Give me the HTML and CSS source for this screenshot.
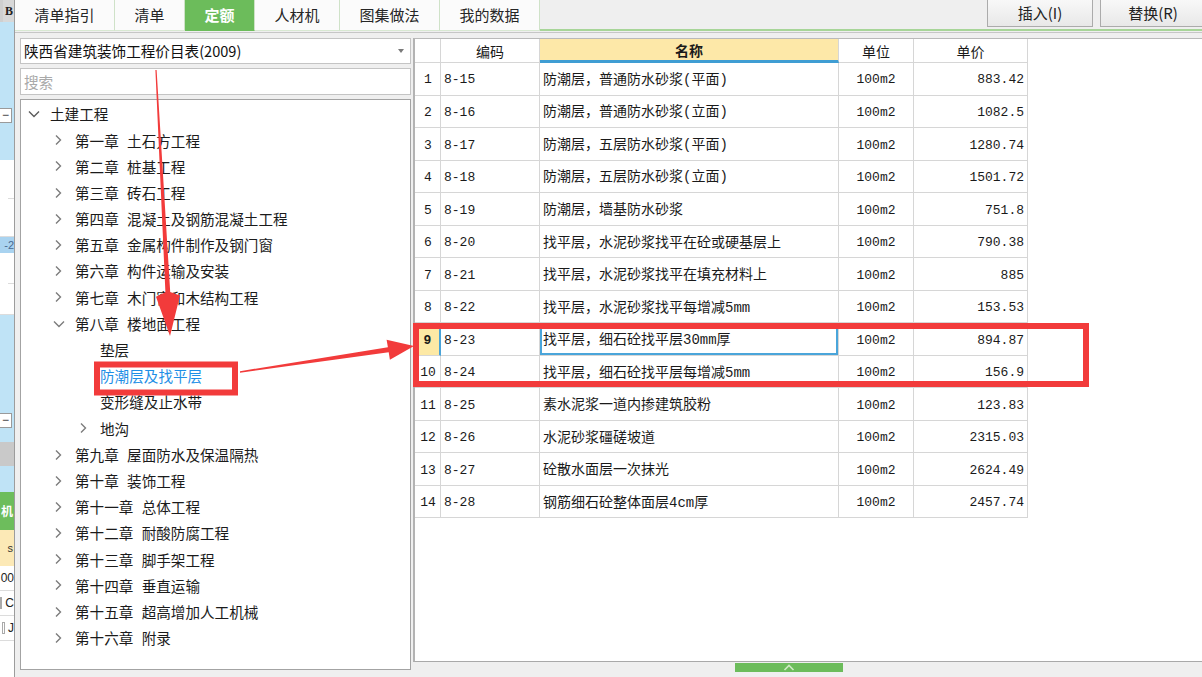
FILE: index.html
```html
<!DOCTYPE html>
<html lang="zh-CN">
<head>
<meta charset="utf-8">
<title>定额</title>
<link rel="stylesheet" href="styles.css">
</head>
<body>
<div class="app">
  <div class="sliver">
    <div class="sv-top">B</div>
    <div class="sv-blue sv-h86"></div>
    <div class="sv-btn">−</div>
    <div class="sv-blue sv-h37"></div>
    <div class="sv-white sv-h77"><div class="sv-line"></div></div>
    <div class="sv-hl">-2</div>
    <div class="sv-white sv-h62"><div class="sv-line"></div></div>
    <div class="sv-blue sv-h98"></div>
    <div class="sv-btn">−</div>
    <div class="sv-blue sv-h14"></div>
    <div class="sv-gray"></div>
    <div class="sv-blue sv-h26"></div>
    <div class="sv-green">机</div>
    <div class="sv-yellow">s</div>
    <div class="sv-cell">00</div>
    <div class="sv-cell"><span class="sv-box"></span>C</div>
    <div class="sv-cell"><span class="sv-box"></span>J</div>
    <div class="sv-rest"></div>
  </div>

  <div class="main">
    <div class="tabbar">
      <div class="tab">清单指引</div>
      <div class="tab">清单</div>
      <div class="tab active">定额</div>
      <div class="tab">人材机</div>
      <div class="tab">图集做法</div>
      <div class="tab">我的数据</div>
      <div class="tabfill">
        <div class="btn">插入(I)</div>
        <div class="btn btn-last">替换(R)</div>
      </div>
    </div>

    <div class="content">
      <div class="leftcol">
        <div class="select"><span>陕西省建筑装饰工程价目表(2009)</span><span class="caret"></span></div>
        <div class="search">搜索</div>
        <div class="tree">
          <div class="trow l0"><svg class="chev" viewBox="0 0 24 16"><polyline points="3,5.5 8,10.5 13,5.5" class="chev-down"/></svg><span>土建工程</span></div>
          <div class="trow l1"><svg class="chev" viewBox="0 0 24 16"><polyline points="5,3.5 9.5,8 5,12.5"/></svg><span>第一章 土石方工程</span></div>
          <div class="trow l1"><svg class="chev" viewBox="0 0 24 16"><polyline points="5,3.5 9.5,8 5,12.5"/></svg><span>第二章 桩基工程</span></div>
          <div class="trow l1"><svg class="chev" viewBox="0 0 24 16"><polyline points="5,3.5 9.5,8 5,12.5"/></svg><span>第三章 砖石工程</span></div>
          <div class="trow l1"><svg class="chev" viewBox="0 0 24 16"><polyline points="5,3.5 9.5,8 5,12.5"/></svg><span>第四章 混凝土及钢筋混凝土工程</span></div>
          <div class="trow l1"><svg class="chev" viewBox="0 0 24 16"><polyline points="5,3.5 9.5,8 5,12.5"/></svg><span>第五章 金属构件制作及钢门窗</span></div>
          <div class="trow l1"><svg class="chev" viewBox="0 0 24 16"><polyline points="5,3.5 9.5,8 5,12.5"/></svg><span>第六章 构件运输及安装</span></div>
          <div class="trow l1"><svg class="chev" viewBox="0 0 24 16"><polyline points="5,3.5 9.5,8 5,12.5"/></svg><span>第七章 木门窗和木结构工程</span></div>
          <div class="trow l1"><svg class="chev" viewBox="0 0 24 16"><polyline points="3,5.5 8,10.5 13,5.5"/></svg><span>第八章 楼地面工程</span></div>
          <div class="trow l2"><span class="chev"></span><span>垫层</span></div>
          <div class="trow l2 sel"><span class="chev"></span><span>防潮层及找平层</span></div>
          <div class="trow l2"><span class="chev"></span><span>变形缝及止水带</span></div>
          <div class="trow l2"><svg class="chev" viewBox="0 0 24 16"><polyline points="5,3.5 9.5,8 5,12.5"/></svg><span>地沟</span></div>
          <div class="trow l1"><svg class="chev" viewBox="0 0 24 16"><polyline points="5,3.5 9.5,8 5,12.5"/></svg><span>第九章 屋面防水及保温隔热</span></div>
          <div class="trow l1"><svg class="chev" viewBox="0 0 24 16"><polyline points="5,3.5 9.5,8 5,12.5"/></svg><span>第十章 装饰工程</span></div>
          <div class="trow l1"><svg class="chev" viewBox="0 0 24 16"><polyline points="5,3.5 9.5,8 5,12.5"/></svg><span>第十一章 总体工程</span></div>
          <div class="trow l1"><svg class="chev" viewBox="0 0 24 16"><polyline points="5,3.5 9.5,8 5,12.5"/></svg><span>第十二章 耐酸防腐工程</span></div>
          <div class="trow l1"><svg class="chev" viewBox="0 0 24 16"><polyline points="5,3.5 9.5,8 5,12.5"/></svg><span>第十三章 脚手架工程</span></div>
          <div class="trow l1"><svg class="chev" viewBox="0 0 24 16"><polyline points="5,3.5 9.5,8 5,12.5"/></svg><span>第十四章 垂直运输</span></div>
          <div class="trow l1"><svg class="chev" viewBox="0 0 24 16"><polyline points="5,3.5 9.5,8 5,12.5"/></svg><span>第十五章 超高增加人工机械</span></div>
          <div class="trow l1"><svg class="chev" viewBox="0 0 24 16"><polyline points="5,3.5 9.5,8 5,12.5"/></svg><span>第十六章 附录</span></div>
        </div>
      </div>

      <div class="rightcol">
        <div class="gridpanel">
          <div class="grow ghead">
            <div class="c cnum"></div>
            <div class="c ccenter">编码</div>
            <div class="c ccenter cname-h">名称</div>
            <div class="c ccenter">单位</div>
            <div class="c ccenter">单价</div>
          </div>
          <div class="grow"><div class="c cnum mono">1</div><div class="c ccode mono">8-15</div><div class="c cname">防潮层，普通防水砂浆(平面)</div><div class="c ccenter mono">100m2</div><div class="c cprice mono">883.42</div></div>
          <div class="grow"><div class="c cnum mono">2</div><div class="c ccode mono">8-16</div><div class="c cname">防潮层，普通防水砂浆(立面)</div><div class="c ccenter mono">100m2</div><div class="c cprice mono">1082.5</div></div>
          <div class="grow"><div class="c cnum mono">3</div><div class="c ccode mono">8-17</div><div class="c cname">防潮层，五层防水砂浆(平面)</div><div class="c ccenter mono">100m2</div><div class="c cprice mono">1280.74</div></div>
          <div class="grow"><div class="c cnum mono">4</div><div class="c ccode mono">8-18</div><div class="c cname">防潮层，五层防水砂浆(立面)</div><div class="c ccenter mono">100m2</div><div class="c cprice mono">1501.72</div></div>
          <div class="grow"><div class="c cnum mono">5</div><div class="c ccode mono">8-19</div><div class="c cname">防潮层，墙基防水砂浆</div><div class="c ccenter mono">100m2</div><div class="c cprice mono">751.8</div></div>
          <div class="grow"><div class="c cnum mono">6</div><div class="c ccode mono">8-20</div><div class="c cname">找平层，水泥砂浆找平在砼或硬基层上</div><div class="c ccenter mono">100m2</div><div class="c cprice mono">790.38</div></div>
          <div class="grow"><div class="c cnum mono">7</div><div class="c ccode mono">8-21</div><div class="c cname">找平层，水泥砂浆找平在填充材料上</div><div class="c ccenter mono">100m2</div><div class="c cprice mono">885</div></div>
          <div class="grow"><div class="c cnum mono">8</div><div class="c ccode mono">8-22</div><div class="c cname">找平层，水泥砂浆找平每增减5mm</div><div class="c ccenter mono">100m2</div><div class="c cprice mono">153.53</div></div>
          <div class="grow cur"><div class="c cnum mono">9</div><div class="c ccode mono">8-23</div><div class="c cname">找平层，细石砼找平层30mm厚</div><div class="c ccenter mono">100m2</div><div class="c cprice mono">894.87</div></div>
          <div class="grow"><div class="c cnum mono">10</div><div class="c ccode mono">8-24</div><div class="c cname">找平层，细石砼找平层每增减5mm</div><div class="c ccenter mono">100m2</div><div class="c cprice mono">156.9</div></div>
          <div class="grow"><div class="c cnum mono">11</div><div class="c ccode mono">8-25</div><div class="c cname">素水泥浆一道内掺建筑胶粉</div><div class="c ccenter mono">100m2</div><div class="c cprice mono">123.83</div></div>
          <div class="grow"><div class="c cnum mono">12</div><div class="c ccode mono">8-26</div><div class="c cname">水泥砂浆礓磋坡道</div><div class="c ccenter mono">100m2</div><div class="c cprice mono">2315.03</div></div>
          <div class="grow"><div class="c cnum mono">13</div><div class="c ccode mono">8-27</div><div class="c cname">砼散水面层一次抹光</div><div class="c ccenter mono">100m2</div><div class="c cprice mono">2624.49</div></div>
          <div class="grow"><div class="c cnum mono">14</div><div class="c ccode mono">8-28</div><div class="c cname">钢筋细石砼整体面层4cm厚</div><div class="c ccenter mono">100m2</div><div class="c cprice mono">2457.74</div></div>
        </div>
        <div class="handlebar">
          <div class="handle"><svg width="12" height="7" viewBox="0 0 12 7"><polyline points="1.5,6 6,1.5 10.5,6"/></svg></div>
        </div>
      </div>
    </div>
  </div>

  <svg class="annot" width="1202" height="677" viewBox="0 0 1202 677">
    <rect x="97" y="364.5" width="138" height="28" class="ann-box"/>
    <rect x="416" y="326" width="670" height="58" class="ann-box"/>
    <polygon class="ann-fill" points="155.4,70 156.6,70 170.2,292 180,295.5 170,336 156,296.7 165.4,292.3"/>
    <polygon class="ann-fill" points="240,371.2 387.9,347.3 386.6,339.8 414,346 389.9,359.8 388.7,352.3 240,372.8"/>
  </svg>
</div>
</body>
</html>
```

FILE: styles.css
```css
* { box-sizing: border-box; }
html, body { margin: 0; padding: 0; }
body {
  width: 1202px;
  height: 677px;
  overflow: hidden;
  background: #efefef;
  font-family: "Noto Sans CJK SC", "Noto Sans", sans-serif;
  line-height: 1.2;
  color: #1b1b1b;
}
.app {
  position: relative;
  display: flex;
  width: 1202px;
  height: 677px;
}

/* left sliver of the window underneath */
.sliver {
  width: 14px;
  flex: none;
  display: flex;
  flex-direction: column;
  overflow: hidden;
  background: #bfe3f6;
  font-family: "Liberation Sans", sans-serif;
  font-size: 12px;
}
.sv-top {
  height: 22px;
  background: #d8d8d8;
  font: bold 12px "Liberation Serif", serif;
  line-height: 22px;
  text-align: right;
  padding-right: 1px;
  color: #222;
  border-left: 3px solid #cfcfcf;
}
.sv-blue { background: #bfe3f6; }
.sv-h86 { height: 86px; }
.sv-h37 { height: 37px; }
.sv-h98 { height: 98px; }
.sv-h14 { height: 14px; }
.sv-h26 { height: 26px; }
.sv-btn {
  height: 15px;
  width: 12px;
  background: #fff;
  border: 1px solid #9a9a9a;
  border-left: none;
  font-size: 12px;
  line-height: 12px;
  text-align: center;
  color: #333;
  flex: none;
}
.sv-white {
  background: #fff;
  border-bottom: 1px solid #dcdcdc;
  position: relative;
  display: flex;
  flex-direction: column;
  justify-content: center;
}
.sv-h77 { height: 77px; }
.sv-h62 { height: 62px; }
.sv-line { height: 1px; background: #dcdcdc; margin-left: 8px; }
.sv-hl {
  height: 16px;
  background: #a9d3f0;
  color: #4a6a90;
  font-size: 11px;
  line-height: 16px;
  text-align: right;
  flex: none;
}
.sv-gray { height: 24px; background: #c9c9c9; flex: none; }
.sv-green {
  height: 38px;
  background: #6dbd5c;
  color: #fff;
  font-family: "Noto Sans CJK SC", sans-serif;
  font-weight: bold;
  font-size: 12px;
  line-height: 38px;
  text-align: right;
  padding-right: 1px;
  flex: none;
}
.sv-yellow {
  height: 36px;
  background: #fce9b6;
  font-size: 11px;
  line-height: 36px;
  text-align: right;
  padding-right: 1px;
  color: #333;
  flex: none;
}
.sv-cell {
  height: 25px;
  background: #fff;
  border-bottom: 1px solid #dcdcdc;
  font-size: 12px;
  line-height: 24px;
  white-space: nowrap;
  color: #222;
  display: flex;
  align-items: center;
  justify-content: flex-end;
  flex: none;
}
.sv-box { width: 3px; height: 12px; border: 1px solid #aaa; margin-right: 3px; }
.sv-rest { flex: 1; background: #fff; }

/* main window */
.main {
  flex: 1;
  min-width: 0;
  display: flex;
  flex-direction: column;
  border-left: 1px solid #9c9c9c;
  background: #efefef;
  overflow: hidden;
}
.tabbar {
  height: 31px;
  flex: none;
  display: flex;
}
.tab {
  height: 31px;
  padding: 0 19.5px;
  display: flex;
  align-items: center;
  font-size: 15px;
  color: #262626;
  background: #fbfbfb;
  border-right: 1px solid #cfe2c8;
  border-bottom: 1px solid #d8e8d2;
  white-space: nowrap;
  flex: none;
}
.tab.active {
  background: #6cbc5b;
  color: #fff;
  font-weight: bold;
  border-bottom-color: #6cbc5b;
}
.tabfill {
  flex: 1;
  display: flex;
  justify-content: flex-end;
  align-items: flex-start;
  gap: 7px;
  height: 31px;
  border-bottom: 2px solid #a7d598;
}
.btn {
  width: 106px;
  height: 27px;
  flex: none;
  border: 1px solid #ababab;
  border-top: none;
  background: linear-gradient(#f8f8f8, #e8e8e8);
  font-size: 15px;
  display: flex;
  align-items: center;
  justify-content: center;
  color: #222;
}
.btn-last { margin-right: -4px; }

.content {
  flex: 1;
  display: flex;
  gap: 2px;
  margin-top: 1px;
  border-top: 1px solid #c6c6c6;
  padding: 5px 0 0 5px;
  min-height: 0;
}

/* left column */
.leftcol {
  width: 391px;
  flex: none;
  display: flex;
  flex-direction: column;
  gap: 4px;
  padding-bottom: 7px;
}
.select {
  height: 26px;
  flex: none;
  border: 1px solid #c4c4c4;
  background: #fff;
  display: flex;
  align-items: center;
  padding-left: 3px;
  font-size: 14.6px;
  color: #111;
}
.caret {
  margin-left: auto;
  margin-right: 6px;
  width: 0;
  height: 0;
  border-top: 4px solid #7a7a7a;
  border-left: 3.5px solid transparent;
  border-right: 3.5px solid transparent;
}
.search {
  height: 27px;
  flex: none;
  border: 1px solid #c4c4c4;
  background: #fff;
  display: flex;
  align-items: center;
  padding-left: 3px;
  font-size: 14.6px;
  color: #a9a9a9;
}
.tree {
  flex: 1;
  border: 1px solid #a3a3a3;
  background: #fff;
  padding-top: 1px;
  overflow: hidden;
}
.trow {
  height: 26.2px;
  display: flex;
  align-items: center;
  font-size: 14.6px;
  color: #1b1b1b;
  white-space: nowrap;
  word-spacing: 5px;
}
.l0 { padding-left: 5px; }
.l1 { padding-left: 30px; }
.l2 { padding-left: 55px; }
.chev {
  width: 24px;
  height: 16px;
  flex: none;
  display: block;
}
.chev polyline {
  fill: none;
  stroke: #7c7c7c;
  stroke-width: 1.4;
}
.chev polyline.chev-down { stroke: #5c5c5c; }
.trow.sel { color: #1f8fe6; }

/* right column */
.rightcol {
  flex: 1;
  min-width: 0;
  display: flex;
  flex-direction: column;
}
.gridpanel {
  height: 624px;
  flex: none;
  background: #fff;
  border-left: 2px solid #b3b3b3;
  border-top: 1px solid #b9b9b9;
  border-bottom: 1px solid #a9a9a9;
  overflow: hidden;
}
.grow {
  display: grid;
  grid-template-columns: 26px 99px 299px 75px 114px;
  height: 32.54px;
}
.ghead { height: 24px; }
.c {
  border-right: 1px solid #d6d6d6;
  border-bottom: 1px solid #d6d6d6;
  display: flex;
  align-items: center;
  white-space: nowrap;
  overflow: hidden;
  font-size: 14px;
  font-family: "Liberation Mono", "Noto Sans CJK SC", monospace;
  color: #1a1a1a;
  padding-top: 3px;
}
.mono { font-size: 13px; }
.cnum { justify-content: center; padding-left: 1px; }
.ccode { padding-left: 3px; }
.cname { padding-left: 3px; }
.ccenter { justify-content: center; }
.cprice { justify-content: flex-end; padding-right: 3px; }
.ghead .c { font-family: "Noto Sans CJK SC", sans-serif; font-size: 14px; padding-top: 2px; }
.cname-h {
  background: #fde8a8;
  font-weight: bold;
  border-bottom: 3px solid #3f9dd3;
}
.grow.cur .cnum {
  background: #fde9a5;
  font-weight: bold;
  border-right: 2px solid #49a3d8;
}
.grow.cur .cname { box-shadow: inset 0 0 0 2px #4aa5da; }

.handlebar {
  flex: 1;
  padding-top: 1px;
}
.handle {
  margin-left: 322px;
  width: 108px;
  height: 9px;
  background: #6cbc5b;
  display: flex;
  justify-content: center;
  align-items: flex-start;
}
.handle svg { display: block; margin-top: 1px; }
.handle polyline { fill: none; stroke: #cfeac4; stroke-width: 1.6; }

/* annotation overlay */
.annot {
  position: absolute;
  left: 0;
  top: 0;
  pointer-events: none;
}
.ann-box { fill: none; stroke: #f23b3b; stroke-width: 6; }
.ann-fill { fill: #f23b3b; }
```
